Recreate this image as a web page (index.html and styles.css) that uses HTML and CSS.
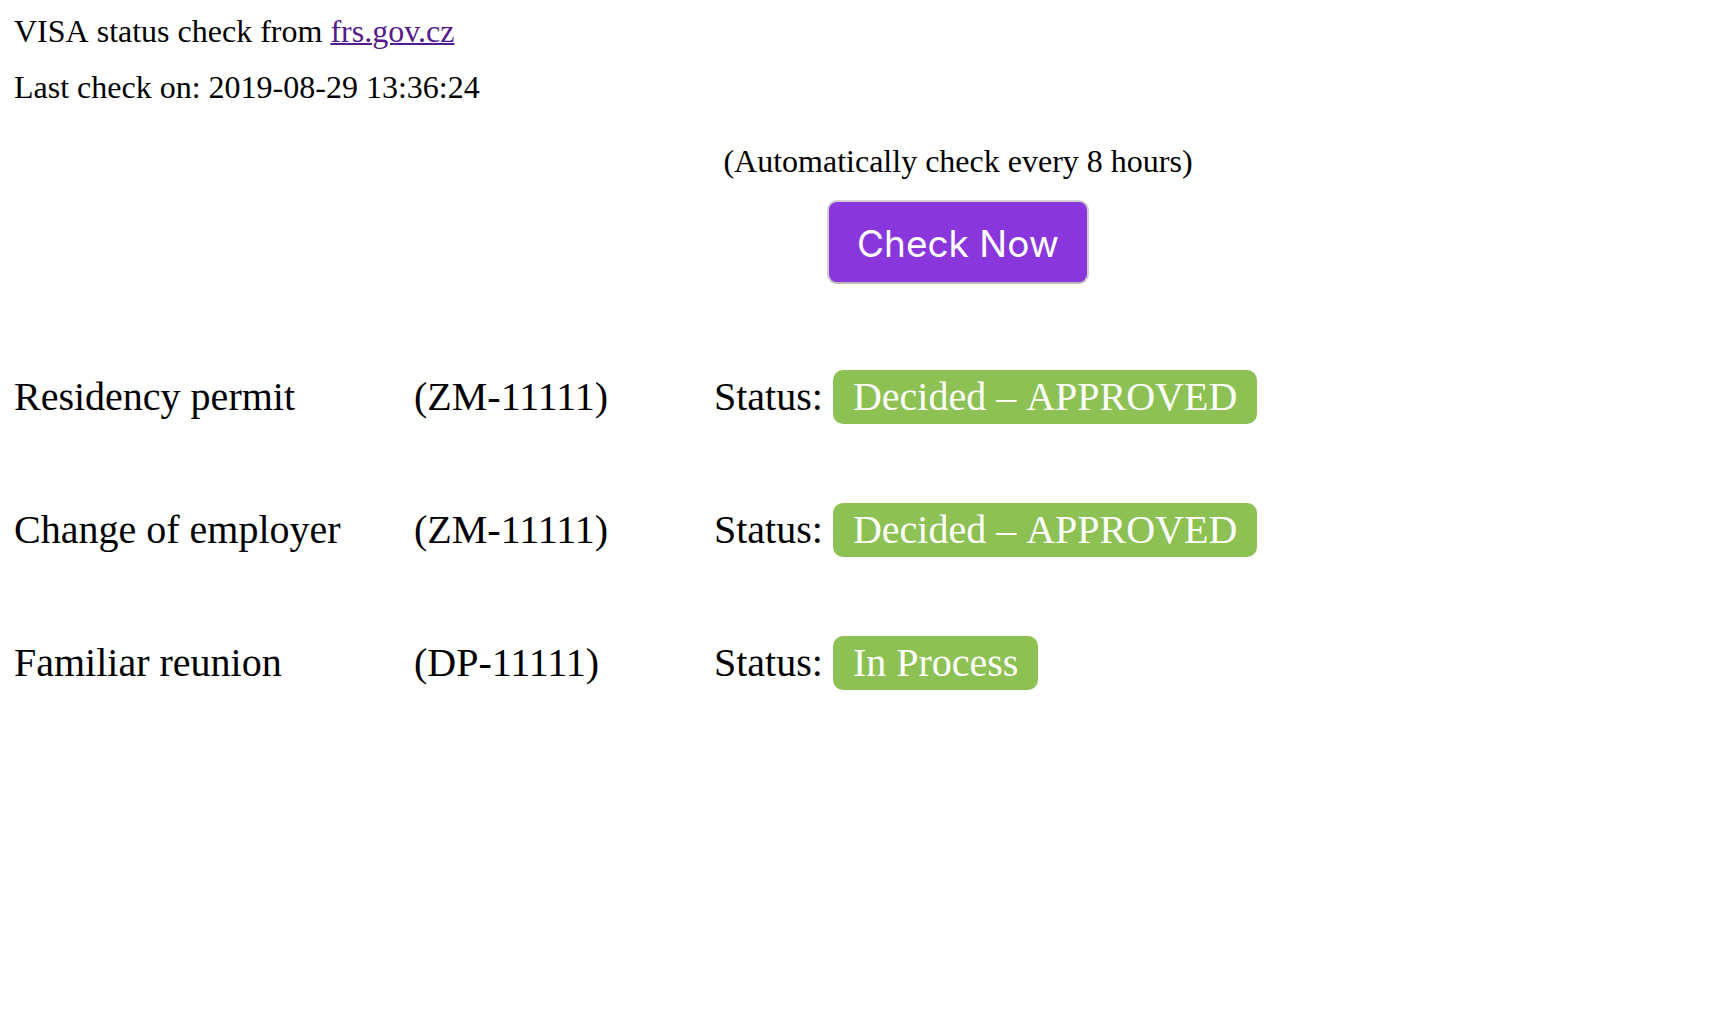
FILE: index.html
```html
<!DOCTYPE html>
<html lang="en">
<head>
<meta charset="utf-8">
<title>VISA status check</title>
<link rel="stylesheet" href="styles.css">
</head>
<body>
<header class="intro">
  <p class="line">VISA status check from <a class="source" href="#">frs.gov.cz</a></p>
  <p class="line">Last check on: 2019-08-29 13:36:24</p>
</header>
<main>
  <section class="check">
    <p class="line">(Automatically check every 8 hours)</p>
    <button class="check-button" type="button">Check Now</button>
  </section>
  <table class="cases">
    <tbody>
      <tr>
        <td class="name">Residency permit</td>
        <td class="number">(ZM-11111)</td>
        <td>Status: <span class="badge">Decided – APPROVED</span></td>
      </tr>
      <tr>
        <td class="name">Change of employer</td>
        <td class="number">(ZM-11111)</td>
        <td>Status: <span class="badge">Decided – APPROVED</span></td>
      </tr>
      <tr>
        <td class="name">Familiar reunion</td>
        <td class="number">(DP-11111)</td>
        <td>Status: <span class="badge">In Process</span></td>
      </tr>
    </tbody>
  </table>
</main>
</body>
</html>
```

FILE: styles.css
```css
body {
  margin: 0;
  padding: 3px 0 0 14px;
  background: #fff;
  color: #000;
  font-family: "Liberation Serif", "Times New Roman", serif;
  font-size: 32px;
  font-kerning: none;
  line-height: 56px;
}

.line {
  margin: 0;
}

.source {
  color: #551a8b;
  font-kerning: normal;
  text-decoration: underline;
  text-decoration-thickness: 2px;
}

.check {
  display: flex;
  flex-direction: column;
  align-items: center;
  gap: 11px;
  margin-left: 190px;
  padding: 18px 0 46px;
}

.check-button {
  box-sizing: border-box;
  height: 84px;
  padding: 4px 28px 0;
  border: 2px solid #d0d0d0;
  border-bottom-color: #b8b8b8;
  border-radius: 10px;
  background: #8936dd;
  color: #fff;
  font-family: Inter, sans-serif;
  font-size: 37px;
  line-height: 48px;
}

.cases {
  width: 100%;
  table-layout: fixed;
  border-collapse: collapse;
  font-size: 40px;
  line-height: 46px;
}

.cases td {
  height: 133px;
  padding: 0;
  vertical-align: middle;
  white-space: nowrap;
}

.name {
  width: 400px;
}

.number {
  width: 300px;
  font-kerning: normal;
}

.badge {
  display: inline-block;
  padding: 4px 20px;
  border-radius: 10px;
  background: #8dc153;
  color: #fff;
}
```
